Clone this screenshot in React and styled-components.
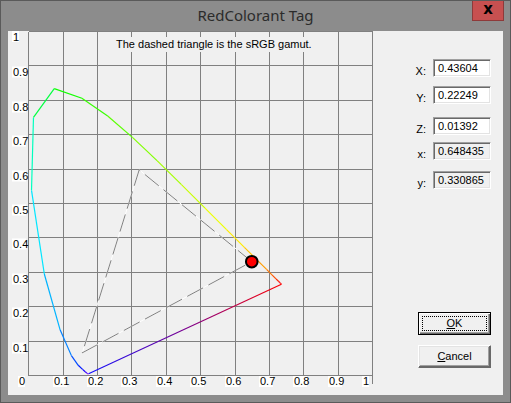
import React from "react";
import styled, { createGlobalStyle } from "styled-components";

const GlobalStyle = createGlobalStyle`
  html, body { margin: 0; padding: 0; background: #8c8c8c; }
  body { font-family: "Liberation Sans", Arial, sans-serif; }
`;

// CIE 1931 spectral locus, 10nm steps
const locus = [
  [380, 0.1741, 0.005], [390, 0.1738, 0.0049], [400, 0.1733, 0.0048],
  [410, 0.1726, 0.0048], [420, 0.1714, 0.0051], [430, 0.1689, 0.0069],
  [440, 0.1644, 0.0109], [450, 0.1566, 0.0177], [460, 0.144, 0.0297],
  [470, 0.1241, 0.0578], [480, 0.0913, 0.1327], [490, 0.0454, 0.295],
  [500, 0.0082, 0.5384], [510, 0.0139, 0.7502], [520, 0.0743, 0.8338],
  [530, 0.1547, 0.8059], [540, 0.2296, 0.7543], [550, 0.3016, 0.6923],
  [560, 0.3731, 0.6245], [570, 0.4441, 0.5547], [580, 0.5125, 0.4866],
  [590, 0.5752, 0.4242], [600, 0.627, 0.3725], [610, 0.6658, 0.334],
  [620, 0.6915, 0.3083], [630, 0.7079, 0.292], [640, 0.719, 0.2809],
  [650, 0.726, 0.274], [660, 0.73, 0.27], [670, 0.732, 0.268],
  [680, 0.7334, 0.2666], [690, 0.7344, 0.2656], [700, 0.7347, 0.2653],
];

const gamut = [
  [0.648435, 0.330865],
  [0.3212, 0.5979],
  [0.1559, 0.066],
];

function waveColor(w) {
  let r = 0, g = 0, b = 0;
  if (w < 440) { r = (440 - w) / 60; b = 1; }
  else if (w < 490) { g = (w - 440) / 50; b = 1; }
  else if (w < 510) { g = 1; b = (510 - w) / 20; }
  else if (w < 580) { r = (w - 510) / 70; g = 1; }
  else if (w < 645) { r = 1; g = (645 - w) / 65; }
  else { r = 1; }
  const h = (v) => Math.round(v * 255).toString(16).padStart(2, "0");
  return `#${h(r)}${h(g)}${h(b)}`;
}

const px = (x) => 20.7 + 344 * x;
const py = (y) => 344.5 - 344 * y;
const gx = (i) => Math.round(20.2 + 34.4 * i) + 0.5;
const gy = (j) => Math.round(344 - 34.4 * j) + 0.5;

const labelWidth = (s) => s.length === 1 ? 7 : 14;
const ticks = ["0", "0.1", "0.2", "0.3", "0.4", "0.5", "0.6", "0.7", "0.8", "0.9", "1"];

const Window = styled.div`
  width: 511px;
  height: 403px;
  box-sizing: border-box;
  border: 1px solid #5a5a5a;
  background: #8c8c8c;
  display: flex;
  flex-direction: column;
`;

const TitleBar = styled.div`
  height: 30px;
  display: grid;
  grid-template-columns: 1fr auto 1fr;
  align-items: start;
`;

const Title = styled.div`
  grid-column: 2;
  font-family: "Noto Sans", "Open Sans", sans-serif;
  font-size: 15px;
  line-height: 28px;
  color: #2b2b2b;
`;

const CloseButton = styled.div`
  grid-column: 3;
  justify-self: end;
  margin-right: 6px;
  width: 32px;
  height: 20px;
  box-sizing: border-box;
  border: 1px solid #8e3a3a;
  border-top: none;
  background: #c75050;
  display: flex;
  align-items: center;
  justify-content: center;
  font-family: "DejaVu Sans", sans-serif;
  font-weight: bold;
  font-size: 15px;
  line-height: 1;
  color: #000;
  padding-bottom: 3px;
`;

const Client = styled.div`
  margin: 0 7px;
  height: 364px;
  background: #f0f0f0;
  display: flex;
`;

const Chart = styled.svg`
  display: block;
  flex: none;
  font-family: "Liberation Sans", Arial, sans-serif;
  font-size: 11px;
`;

const Side = styled.div`
  flex: 1;
  padding-top: 28px;
  display: flex;
  flex-direction: column;
  font-size: 11px;
  color: #000;
`;

const Field = styled.div`
  display: flex;
  align-items: flex-end;
  margin-top: ${(p) => p.$mt}px;
`;

const FieldLabel = styled.span`
  width: 44px;
  text-align: right;
  line-height: 11px;
  margin-right: 7px;
`;

const ValueBox = styled.div`
  width: 58px;
  height: 18px;
  box-sizing: border-box;
  border: 1px solid;
  border-color: #a0a0a0 #ffffff #ffffff #a0a0a0;
  box-shadow: inset 1px 1px #696969, inset -1px -1px #e3e3e3;
  background: ${(p) => (p.$readOnly ? "#f0f0f0" : "#ffffff")};
  padding: 1px 0 0 4px;
  line-height: 14px;
`;

const Buttons = styled.div`
  margin-top: 123px;
  margin-left: 36px;
  display: flex;
  flex-direction: column;
  gap: 10px;
`;

const Button = styled.div`
  position: relative;
  width: 73px;
  height: 23px;
  box-sizing: border-box;
  background: #f0f0f0;
  display: flex;
  align-items: center;
  justify-content: center;
  line-height: 13px;
  border: 1px solid ${(p) => (p.$default ? "#000" : "#fff")};
  box-shadow: ${(p) =>
    p.$default
      ? "inset 1px 1px #fff, inset -1px -1px #696969, inset -2px -2px #a0a0a0"
      : "inset -1px -1px #696969, inset 1px 1px #e3e3e3, inset -2px -2px #a0a0a0"};
  border-right-color: ${(p) => (p.$default ? "#000" : "#696969")};
  border-bottom-color: ${(p) => (p.$default ? "#000" : "#696969")};

  ${(p) =>
    p.$default &&
    `&::after {
      content: "";
      position: absolute;
      inset: 3px;
      border: 1px dotted #000;
    }`}
`;

function SpectralChart() {
  const segs = [];
  for (let i = 0; i < locus.length - 1; i++) {
    const [w1, x1, y1] = locus[i];
    const [, x2, y2] = locus[i + 1];
    segs.push(
      <line
        key={w1}
        x1={px(x1)} y1={py(y1)} x2={px(x2)} y2={py(y2)}
        stroke={waveColor(w1 - 5)}
        strokeWidth="1.2"
      />
    );
  }
  const red = locus[locus.length - 1];
  const blue = locus[0];
  const tri = gamut.map(([x, y]) => `${px(x)},${py(y)}`).join(" ");

  return (
    <Chart width="374" height="364" viewBox="0 0 374 364">
      <defs>
        <linearGradient
          id="purple"
          gradientUnits="userSpaceOnUse"
          x1={px(red[1])} y1={py(red[2])} x2={px(blue[1])} y2={py(blue[2])}
        >
          <stop offset="0" stopColor="#ff0000" />
          <stop offset="0.5" stopColor="#7a0090" />
          <stop offset="1" stopColor="#1010ff" />
        </linearGradient>
      </defs>

      <g stroke="#808080" strokeWidth="1" shapeRendering="crispEdges">
        {ticks.map((_, i) => (
          <line key={"v" + i} x1={gx(i)} y1={gy(10)} x2={gx(i)} y2={i === 10 ? gy(0) + 8 : gy(0)} />
        ))}
        {ticks.map((_, j) => (
          <line key={"h" + j} x1={gx(0)} y1={gy(j)} x2={gx(10)} y2={gy(j)} />
        ))}
      </g>

      {ticks.slice(1).map((t, j) => (
        <g key={"yl" + t}>
          <rect x="4" y={gy(j + 1) + (j === 9 ? -0.5 : 1)} width={labelWidth(t)} height="11" fill="#fff" />
          <text x="5" y={gy(j + 1) + (j === 9 ? 9 : 10)} fill="#000">{t}</text>
        </g>
      ))}
      {ticks.map((t, i) => (
        <g key={"xl" + t}>
          <rect x={gx(i) - 10.5} y="345" width={labelWidth(t)} height="11" fill="#fff" />
          <text x={gx(i) - 9.5} y="354" fill="#000">{t}</text>
        </g>
      ))}

      <rect x="107" y="6" width="189" height="15" fill="#f0f0f0" />
      <text x="108" y="17" fill="#000">The dashed triangle is the sRGB gamut.</text>

      <polygon points={tri} fill="none" stroke="#ffffff" strokeWidth="1" />
      <polygon points={tri} fill="none" stroke="#808080" strokeWidth="1" strokeDasharray="18 6" />

      {segs}
      <line
        x1={px(red[1])} y1={py(red[2])} x2={px(blue[1])} y2={py(blue[2])}
        stroke="url(#purple)" strokeWidth="1.2"
      />

      <circle cx={px(0.648435)} cy={py(0.330865)} r="5.8" fill="#ff0000" stroke="#000" strokeWidth="2" />
    </Chart>
  );
}

const fields = [
  { label: "X:", value: "0.43604", mt: 0 },
  { label: "Y:", value: "0.22249", mt: 9 },
  { label: "Z:", value: "0.01392", mt: 13 },
  { label: "x:", value: "0.648435", mt: 7, readOnly: true },
  { label: "y:", value: "0.330865", mt: 11, readOnly: true },
];

export default function App() {
  return (
    <>
      <GlobalStyle />
      <Window>
        <TitleBar>
          <Title>RedColorant Tag</Title>
          <CloseButton>x</CloseButton>
        </TitleBar>
        <Client>
          <SpectralChart />
          <Side>
            {fields.map((f) => (
              <Field key={f.label} $mt={f.mt}>
                <FieldLabel>{f.label}</FieldLabel>
                <ValueBox $readOnly={f.readOnly}>{f.value}</ValueBox>
              </Field>
            ))}
            <Buttons>
              <Button $default>
                <span><u>O</u>K</span>
              </Button>
              <Button>
                <span><u>C</u>ancel</span>
              </Button>
            </Buttons>
          </Side>
        </Client>
      </Window>
    </>
  );
}
